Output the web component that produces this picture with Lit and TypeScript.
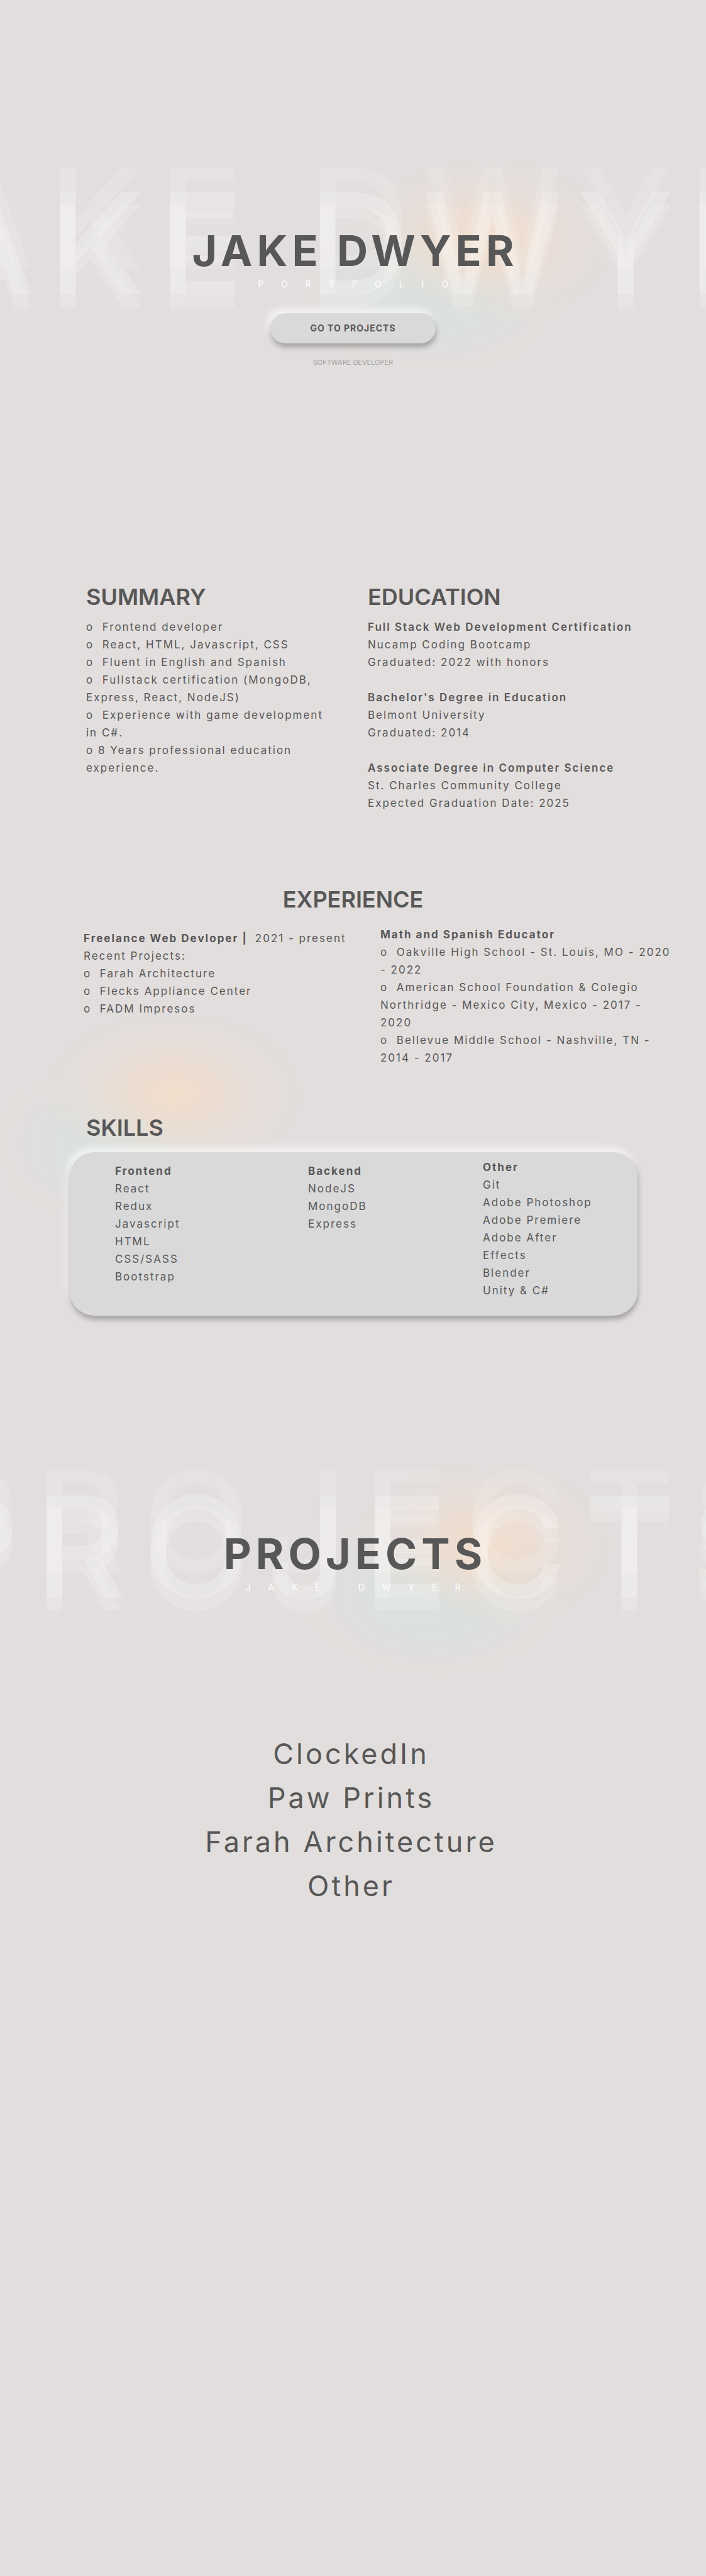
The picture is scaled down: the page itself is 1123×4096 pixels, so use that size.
import { LitElement, html, css } from "lit";
import { customElement, property } from "lit/decorators.js";

const glowStyles = css`
  .glow {
    position: absolute;
    width: 600px;
    height: 420px;
    z-index: -2;
    pointer-events: none;
    background:
      radial-gradient(
        205px 130px at 350px 170px,
        rgba(243, 222, 203, 0.95) 0%,
        rgba(240, 221, 206, 0.75) 35%,
        rgba(233, 220, 214, 0.4) 70%,
        rgba(230, 221, 219, 0) 100%
      ),
      radial-gradient(
        220px 140px at 270px 250px,
        rgba(214, 226, 224, 0.9) 0%,
        rgba(216, 226, 223, 0.65) 40%,
        rgba(222, 224, 222, 0.25) 75%,
        rgba(226, 222, 221, 0) 100%
      );
  }
`;

/** Large heading with a stacked translucent echo of its text behind it. */
@customElement("echo-title")
export class EchoTitle extends LitElement {
  @property() heading = "";
  @property() caption = "";

  static styles = [
    glowStyles,
    css`
      :host {
        display: block;
        position: relative;
        isolation: isolate;
        text-align: center;
      }
      .heading {
        margin: 0;
        padding-left: 7px;
        font-size: 68px;
        line-height: 80px;
        font-weight: 700;
        letter-spacing: 7px;
        color: #575757;
      }
      .caption {
        margin: 4px 0 0;
        padding-left: 28px;
        font-size: 14px;
        line-height: 20px;
        letter-spacing: 28px;
        color: #fff;
      }
      .echo {
        position: absolute;
        top: -83px;
        left: 0;
        right: 0;
        z-index: -1;
        display: flex;
        justify-content: center;
        padding-left: 46px;
        white-space: nowrap;
        font-size: 223px;
        line-height: 224px;
        font-weight: 500;
        letter-spacing: 22px;
        color: rgba(255, 255, 255, 0.23);
        text-shadow:
          0 -82px rgba(255, 255, 255, 0.06),
          0 -40px rgba(255, 255, 255, 0.12),
          0 20px rgba(255, 255, 255, 0.16),
          0 38px rgba(255, 255, 255, 0.05);
        pointer-events: none;
      }
      :host([airy]) .echo {
        padding-left: 34px;
        letter-spacing: 26px;
      }
      .glow {
        top: -145px;
        left: calc(50% - 142px);
      }
    `,
  ];

  render() {
    return html`
      <div class="glow"></div>
      <div class="echo" aria-hidden="true">${this.heading}</div>
      <h1 class="heading">${this.heading}</h1>
      <p class="caption">${this.caption}</p>
    `;
  }
}

const summary = [
  "o\u00a0 Frontend developer",
  "o\u00a0 React, HTML, Javascript, CSS",
  "o\u00a0 Fluent in English and Spanish",
  "o\u00a0 Fullstack certification (MongoDB, Express, React, NodeJS)",
  "o\u00a0 Experience with game development in C#.",
  "o 8 Years professional education experience.",
];

const education = [
  ["Full Stack Web Development Certification", "Nucamp Coding Bootcamp", "Graduated: 2022 with honors"],
  ["Bachelor's Degree in Education", "Belmont University", "Graduated: 2014"],
  ["Associate Degree in Computer Science", "St. Charles Community College", "Expected Graduation Date: 2025"],
];

const freelance = ["Farah Architecture", "Flecks Appliance Center", "FADM Impresos"];

const teaching = [
  "Oakville High School - St. Louis, MO - 2020 - 2022",
  "American School Foundation & Colegio Northridge - Mexico City, Mexico - 2017 - 2020",
  "Bellevue Middle School - Nashville, TN - 2014 - 2017",
];

const skills = [
  { name: "Frontend", items: ["React", "Redux", "Javascript", "HTML", "CSS/SASS", "Bootstrap"] },
  { name: "Backend", items: ["NodeJS", "MongoDB", "Express"] },
  { name: "Other", items: ["Git", "Adobe Photoshop", "Adobe Premiere", "Adobe After Effects", "Blender", "Unity & C#"] },
];

const projects = ["ClockedIn", "Paw Prints", "Farah Architecture", "Other"];

@customElement("app-root")
export class AppRoot extends LitElement {
  static styles = [
    glowStyles,
    css`
      :host {
        display: block;
        overflow-x: clip;
        background: #e2dedd;
        color: #575757;
        font-family: Inter, "Open Sans", sans-serif;
        font-size: 17px;
        line-height: 28px;
        letter-spacing: 2px;
      }
      main {
        isolation: isolate;
      }
      .hero {
        display: flex;
        flex-direction: column;
        align-items: center;
        padding-top: 358px;
      }
      .hero echo-title {
        width: 100%;
      }
      .cta {
        position: relative;
        min-width: 263px;
        height: 48px;
        margin-top: 36px;
        border: 0;
        border-radius: 24px;
        background: #d9d9d9;
        color: #575757;
        font-family: inherit;
        font-size: 14px;
        line-height: 20px;
        font-weight: 700;
        letter-spacing: 1px;
        cursor: pointer;
      }
      .cta,
      .card {
        box-shadow:
          1px 6px 8px rgba(0, 0, 0, 0.28),
          -4px -7px 12px rgba(255, 255, 255, 0.7);
      }
      .role {
        margin: 22px 0 0;
        font-size: 11px;
        line-height: 16px;
        letter-spacing: 0;
        color: #a0a0a0;
      }
      h2 {
        margin: 0;
        font-size: 36px;
        line-height: 44px;
        font-weight: 600;
        letter-spacing: 0;
      }
      h3 {
        margin: 0;
        font-size: inherit;
        line-height: inherit;
        font-weight: 600;
      }
      p {
        margin: 0;
      }
      ul {
        list-style: none;
        margin: 0;
        padding: 0;
      }
      .columns {
        display: grid;
        grid-template-columns: 388fr 470fr;
        gap: 60px;
        padding: 0 68px 0 137px;
        margin-top: 343px;
      }
      .columns h2 {
        margin-bottom: 12px;
      }
      .degrees {
        display: grid;
        gap: 28px;
      }
      .experience {
        margin-top: 117px;
      }
      .experience h2 {
        text-align: center;
      }
      .jobs {
        display: grid;
        grid-template-columns: 434fr 468fr;
        gap: 38px;
        padding: 20px 50px 0 133px;
      }
      .job-own {
        padding-top: 6px;
      }
      .present {
        font-weight: 400;
      }
      .skills {
        position: relative;
        margin-top: 75px;
        padding: 0 109px 0 111px;
      }
      .skills .glow {
        top: -201px;
        left: -75px;
      }
      .skills h2 {
        padding-left: 26px;
      }
      .card {
        display: grid;
        grid-template-columns: 307fr 278fr 180fr;
        margin-top: 17px;
        padding: 10px 66px 26px 72px;
        border-radius: 39px;
        background: #d9d9d9;
      }
      .group {
        padding-top: 6px;
      }
      .group:last-child {
        padding-top: 0;
      }
      .group h3,
      .job-own h3,
      .job-school h3 {
        font-weight: 700;
      }
      .projects {
        padding: 338px 0 1064px;
      }
      .project-list {
        margin-top: 220px;
        padding-right: 6px;
        text-align: center;
        font-size: 45px;
        line-height: 70px;
        letter-spacing: 4px;
      }
      .project-list a {
        color: inherit;
        text-decoration: none;
      }
    `,
  ];

  private showProjects() {
    this.renderRoot.querySelector("#projects")?.scrollIntoView({ behavior: "smooth" });
  }

  render() {
    return html`
      <main>
        <section class="hero">
          <echo-title heading="JAKE DWYER" caption="PORTFOLIO"></echo-title>
          <button class="cta" @click=${this.showProjects}>GO TO PROJECTS</button>
          <p class="role">SOFTWARE DEVELOPER</p>
        </section>

        <div class="columns">
          <section>
            <h2>SUMMARY</h2>
            <ul>
              ${summary.map((line) => html`<li>${line}</li>`)}
            </ul>
          </section>
          <section>
            <h2>EDUCATION</h2>
            <div class="degrees">
              ${education.map(
                ([degree, school, date]) => html`
                  <div>
                    <h3>${degree}</h3>
                    <p>${school}</p>
                    <p>${date}</p>
                  </div>
                `,
              )}
            </div>
          </section>
        </div>

        <section class="experience">
          <h2>EXPERIENCE</h2>
          <div class="jobs">
            <div class="job-own">
              <h3>Freelance Web Devloper&nbsp;|&nbsp; <span class="present">2021 - present</span></h3>
              <p>Recent Projects:</p>
              <ul>
                ${freelance.map((name) => html`<li>o&nbsp; ${name}</li>`)}
              </ul>
            </div>
            <div class="job-school">
              <h3>Math and Spanish Educator</h3>
              <ul>
                ${teaching.map((place) => html`<li>o&nbsp; ${place}</li>`)}
              </ul>
            </div>
          </div>
        </section>

        <section class="skills">
          <div class="glow"></div>
          <h2>SKILLS</h2>
          <div class="card">
            ${skills.map(
              (group) => html`
                <div class="group">
                  <h3>${group.name}</h3>
                  <ul>
                    ${group.items.map((item) => html`<li>${item}</li>`)}
                  </ul>
                </div>
              `,
            )}
          </div>
        </section>

        <section class="projects" id="projects">
          <echo-title airy heading="PROJECTS" caption="JAKE DWYER"></echo-title>
          <ul class="project-list">
            ${projects.map((name) => html`<li><a href="#projects">${name}</a></li>`)}
          </ul>
        </section>
      </main>
    `;
  }
}
